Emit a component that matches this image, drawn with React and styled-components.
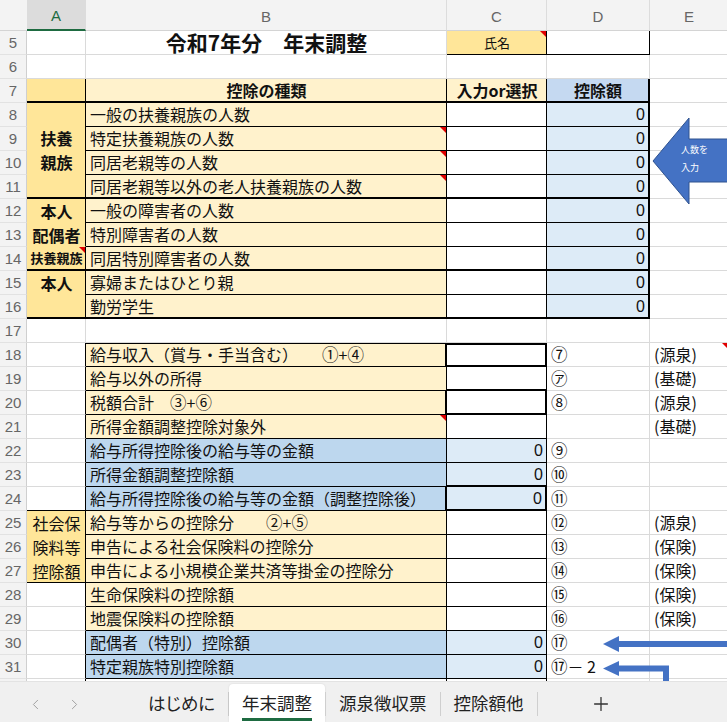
import React from "react";
import styled, { createGlobalStyle } from "styled-components";
import { ChevronLeft, ChevronRight, Plus } from "lucide-react";

const JP = '"Noto Sans CJK JP", "Liberation Sans", sans-serif';
const LATIN = '"Liberation Sans", Arial, sans-serif';

const ORANGE = "#ffe699";
const CREAM = "#fff2cc";
const SKY = "#ddebf7";
const BLUE = "#bdd7ee";
const HEAD_BLUE = "#c5d9f1";
const GRID = "#dadada";

const GlobalStyle = createGlobalStyle`
  html, body { margin: 0; padding: 0; background: #fff; }
  body { font-family: ${JP}; overflow: hidden; }
`;

const Page = styled.div`
  position: relative;
  width: 727px;
  height: 722px;
  overflow: hidden;
  display: flex;
  flex-direction: column;
`;

const Sheet = styled.div`
  position: relative;
  flex: 0 0 681px;
  overflow: hidden;
  display: grid;
  grid-template-columns: 27px 59px 361px 100px 103px 79px;
  grid-template-rows: 31px repeat(28, 24px);
`;

const Corner = styled.div`
  background: #f3f3f3;
  border-bottom: 1px solid #d4d4d4;
`;

const ColHead = styled.div`
  display: flex;
  align-items: center;
  justify-content: center;
  box-sizing: border-box;
  padding-top: 2px;
  background: ${(p) => (p.$active ? "#dcdcdc" : "#f3f3f3")};
  color: ${(p) => (p.$active ? "#1e6b41" : "#666")};
  font: 15px ${LATIN};
  border-right: 1px solid #dcdcdc;
  border-bottom: ${(p) => (p.$active ? "2px solid #1e6b41" : "1px solid #d4d4d4")};
`;

const RowHead = styled.div`
  display: flex;
  align-items: center;
  justify-content: center;
  box-sizing: border-box;
  background: #f3f3f3;
  color: #666;
  font: 15px ${LATIN};
  border-right: 1px solid #cfcfcf;
  border-bottom: 1px solid #e2e2e2;
`;

const edge = (w) => {
  if (w === -1) return "1px solid transparent";
  return w ? `${w}px solid #000` : `1px solid ${GRID}`;
};

const inset = (t, l) => {
  const parts = [];
  if (t) parts.push(`inset 0 ${t}px 0 #000`);
  if (l) parts.push(`inset ${l}px 0 0 #000`);
  return parts.length ? parts.join(", ") : "none";
};

const ALIGN = { left: "flex-start", center: "center", right: "flex-end" };

const Cell = styled.div`
  position: relative;
  box-sizing: border-box;
  display: flex;
  flex-direction: column;
  justify-content: ${(p) => (p.$valign === "top" ? "flex-start" : "center")};
  align-items: ${(p) => ALIGN[p.$align || "left"]};
  grid-row: ${(p) => (p.$span ? `span ${p.$span}` : "auto")};
  padding: 0 3px 0 4px;
  background: ${(p) => p.$fill || "#fff"};
  border-right: ${(p) => edge(p.$r)};
  border-bottom: ${(p) => edge(p.$b)};
  box-shadow: ${(p) => inset(p.$t, p.$l)};
  font-family: ${(p) => (p.$num ? LATIN : JP)};
  font-size: ${(p) => p.$size || 16}px;
  font-weight: ${(p) => (p.$bold ? 700 : 400)};
  line-height: 23px;
  white-space: nowrap;
  color: #111;

  &::after {
    content: "";
    display: ${(p) => (p.$note ? "block" : "none")};
    position: absolute;
    top: 0;
    right: 0;
    border-left: 6px solid transparent;
    border-top: 6px solid #e00000;
  }
`;

const Line = styled.span`
  display: block;
  line-height: 24px;
  font-size: ${(p) => (p.$size ? `${p.$size}px` : "inherit")};
`;

// 丸数字は少しだけ大きく (行の高さ 24px に収まる範囲で)
const Circ = styled.span`
  font-size: 16.5px;
  line-height: 1;
`;

const Overlay = styled.svg`
  position: absolute;
  pointer-events: none;
`;

const TabBar = styled.div`
  flex: 1;
  display: flex;
  align-items: stretch;
  background: #f0f0f0;
  border-top: 1px solid #e3e3e3;
`;

const Nav = styled.div`
  display: flex;
  align-items: center;
  gap: 22px;
  padding: 4px 0 0 27px;
  width: 108px;
  color: #a0a0a0;
`;

const Tab = styled.div`
  display: flex;
  align-items: center;
  padding: 2px 13px 0;
  margin-top: 2px;
  font-size: 17.5px;
  font-feature-settings: "palt";
  color: #222;
  background: ${(p) => (p.$active ? "#fff" : "transparent")};
  border-radius: ${(p) => (p.$active ? "4px 4px 0 0" : "0")};
  box-shadow: ${(p) => (p.$active ? "0 0 2px rgba(0,0,0,0.12)" : "none")};
`;

const TabLabel = styled.span`
  padding: 2px 0 3px;
  border-bottom: 3px solid ${(p) => (p.$active ? "#1e6b41" : "transparent")};
`;

const Divider = styled.div`
  align-self: center;
  width: 1px;
  height: 24px;
  margin-top: 4px;
  background: #cfcfcf;
`;

const AddSheet = styled.div`
  display: flex;
  align-items: center;
  padding: 3px 0 0 52px;
  color: #333;
`;

const CIRCLED = /([\u2460-\u24ff\u3251-\u325f\u32b1-\u32bf\u32d0-\u32fe]+)/;

const withCircles = (text) =>
  String(text)
    .split(CIRCLED)
    .map((part, i) => (i % 2 ? <Circ key={i}>{part}</Circ> : part));

const blank = () => ({});

const groupRows = [
  { text: "一般の扶養親族の人数", a: { span: 4, lines: ["扶養", "親族"], bold: true } },
  { text: "特定扶養親族の人数", note: true },
  { text: "同居老親等の人数", note: true },
  { text: "同居老親等以外の老人扶養親族の人数", note: true, end: true },
  { text: "一般の障害者の人数", a: { span: 2, lines: ["本人", "配偶者"], bold: true, b: -1 } },
  { text: "特別障害者の人数" },
  { text: "同居特別障害者の人数", end: true, a: { lines: [{ t: "扶養親族", size: 13 }], bold: true, note: true } },
  { text: "寡婦またはひとり親", a: { span: 2, lines: ["本人"], bold: true, valign: "top" } },
  { text: "勤労学生", end: true },
];

const rows = [
  {
    n: 5,
    cells: [
      blank(),
      { text: "令和7年分　年末調整", bold: true, size: 21, align: "center" },
      { text: "氏名", fill: ORANGE, size: 13, align: "center", r: 1, b: 1, note: true },
      { r: 1, b: 1 },
      blank(),
    ],
  },
  { n: 6, cells: [blank(), blank(), blank(), blank(), blank()] },
  {
    n: 7,
    cells: [
      { fill: ORANGE, r: 1, b: 2 },
      { text: "控除の種類", fill: CREAM, bold: true, align: "center", r: 1, b: 2 },
      { text: "入力or選択", fill: CREAM, bold: true, align: "center", r: 1, b: 2 },
      { text: "控除額", fill: HEAD_BLUE, bold: true, align: "center", r: 2, b: 2 },
      blank(),
    ],
  },
  ...groupRows.map((g, i) => {
    const b = g.end ? 2 : 1;
    const cells = [];
    if (g.a) cells.push({ fill: ORANGE, r: 1, b: 2, align: "center", ...g.a });
    cells.push({ text: g.text, fill: CREAM, r: 1, b, note: g.note });
    cells.push({ r: 1, b });
    cells.push({ text: "0", num: true, fill: SKY, align: "right", r: 2, b });
    cells.push(blank());
    return { n: 8 + i, cells };
  }),
  { n: 17, cells: [blank(), blank(), blank(), blank(), blank()] },
  {
    n: 18,
    cells: [
      { r: 1 },
      { text: "給与収入（賞与・手当含む）　　①+④", fill: CREAM, t: 1, r: 2, b: 1 },
      { t: 2, r: 2, b: 2 },
      { text: "⑦" },
      { text: "(源泉)", note: true },
    ],
  },
  {
    n: 19,
    cells: [{ r: 1 }, { text: "給与以外の所得", fill: CREAM, r: 1, b: 1 }, { r: 1, b: 2 }, { text: "㋐" }, { text: "(基礎)" }],
  },
  {
    n: 20,
    cells: [{ r: 1 }, { text: "税額合計　③+⑥", fill: CREAM, r: 2, b: 1 }, { r: 2, b: 2 }, { text: "⑧" }, { text: "(源泉)" }],
  },
  {
    n: 21,
    cells: [{ r: 1 }, { text: "所得金額調整控除対象外", fill: CREAM, r: 1, b: 1, note: true }, { r: 1, b: 1 }, blank(), { text: "(基礎)" }],
  },
  {
    n: 22,
    cells: [
      { r: 1 },
      { text: "給与所得控除後の給与等の金額", fill: BLUE, r: 1, b: 1 },
      { text: "0", num: true, fill: SKY, align: "right", r: 1, b: 1 },
      { text: "⑨" },
      blank(),
    ],
  },
  {
    n: 23,
    cells: [
      { r: 1 },
      { text: "所得金額調整控除額", fill: BLUE, r: 1, b: 1 },
      { text: "0", num: true, fill: SKY, align: "right", r: 1, b: 2 },
      { text: "⑩" },
      blank(),
    ],
  },
  {
    n: 24,
    cells: [
      { r: 1, b: 1 },
      { text: "給与所得控除後の給与等の金額（調整控除後）", fill: BLUE, r: 2, b: 1 },
      { text: "0", num: true, fill: SKY, align: "right", r: 2, b: 2 },
      { text: "⑪" },
      blank(),
    ],
  },
  ...[
    ["給与等からの控除分　　②+⑤", "⑫", "(源泉)"],
    ["申告による社会保険料の控除分", "⑬", "(保険)"],
    ["申告による小規模企業共済等掛金の控除分", "⑭", "(保険)"],
    ["生命保険料の控除額", "⑮", "(保険)"],
    ["地震保険料の控除額", "⑯", "(保険)"],
    ["配偶者（特別）控除額", "⑰", ""],
    ["特定親族特別控除額", "⑰－ 2", ""],
  ].map(([label, mark, kind], i) => {
    const total = i >= 5;
    const cells = [];
    if (i === 0) {
      cells.push({ span: 3, fill: ORANGE, r: 1, b: 1, align: "center", lines: ["社会保", "険料等", "控除額"] });
    } else if (i > 2) {
      cells.push({ r: 1 });
    }
    cells.push({ text: label, fill: total ? BLUE : CREAM, r: 1, b: 1 });
    cells.push(total ? { text: "0", num: true, fill: SKY, align: "right", r: 1, b: 1 } : { r: 1, b: 1 });
    cells.push({ text: mark });
    cells.push({ text: kind });
    return { n: 25 + i, cells };
  }),
  { n: 32, cells: [{ r: 1 }, { r: 1 }, { r: 1 }, blank(), blank()] },
];

const renderCell = (c, key) => (
  <Cell
    key={key}
    $fill={c.fill}
    $align={c.align}
    $valign={c.valign}
    $span={c.span}
    $bold={c.bold}
    $size={c.size}
    $num={c.num}
    $note={c.note}
    $t={c.t}
    $r={c.r}
    $b={c.b}
    $l={c.l}
  >
    {c.lines
      ? c.lines.map((ln, i) =>
          typeof ln === "string" ? (
            <Line key={i}>{ln}</Line>
          ) : (
            <Line key={i} $size={ln.size}>
              {ln.t}
            </Line>
          )
        )
      : c.text && <span>{withCircles(c.text)}</span>}
  </Cell>
);

export default function App() {
  return (
    <Page>
      <GlobalStyle />
      <Sheet>
        <Corner />
        {["A", "B", "C", "D", "E"].map((col) => (
          <ColHead key={col} $active={col === "A"}>
            {col}
          </ColHead>
        ))}
        {rows.map((row) => (
          <React.Fragment key={row.n}>
            <RowHead>{row.n}</RowHead>
            {row.cells.map((c, i) => renderCell(c, `${row.n}-${i}`))}
          </React.Fragment>
        ))}

        {/* 人数入力の案内矢印 */}
        <Overlay style={{ left: 652, top: 116 }} width="80" height="90" viewBox="0 0 80 90">
          <path
            d="M1 45 L37 2 L37 23 L80 23 L80 66 L37 66 L37 88 Z"
            fill="#4472c4"
            stroke="#2f528f"
            strokeWidth="1"
          />
          <text x="29" y="37" fill="#fff" fontSize="9" fontFamily={JP}>
            人数を
          </text>
          <text x="29" y="55" fill="#fff" fontSize="9" fontFamily={JP}>
            入力
          </text>
        </Overlay>

        {/* 配偶者控除・特定親族控除への矢印 */}
        <Overlay style={{ left: 600, top: 630 }} width="130" height="52" viewBox="0 0 130 52">
          <path d="M3 14 L19 6 L19 11 L130 11 L130 17 L19 17 L19 22 Z" fill="#4472c4" />
          <path d="M3 38.5 L19 31 L19 35.5 L69 35.5 L69 52 L63 52 L63 41.5 L19 41.5 L19 46 Z" fill="#4472c4" />
        </Overlay>
      </Sheet>

      <TabBar>
        <Nav>
          <ChevronLeft size={17} strokeWidth={1.4} />
          <ChevronRight size={17} strokeWidth={1.4} />
        </Nav>
        <Tab>
          <TabLabel>はじめに</TabLabel>
        </Tab>
        <Divider />
        <Tab $active>
          <TabLabel $active>年末調整</TabLabel>
        </Tab>
        <Divider />
        <Tab>
          <TabLabel>源泉徴収票</TabLabel>
        </Tab>
        <Divider />
        <Tab>
          <TabLabel>控除額他</TabLabel>
        </Tab>
        <Divider />
        <AddSheet>
          <Plus size={22} strokeWidth={1.4} />
        </AddSheet>
      </TabBar>
    </Page>
  );
}
